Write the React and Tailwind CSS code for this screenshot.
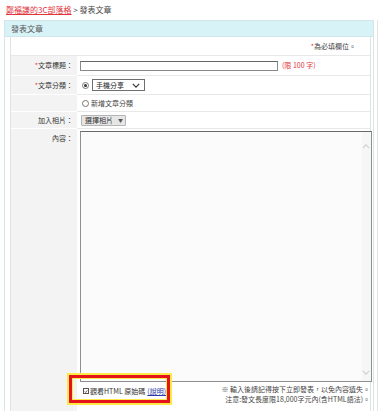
import React from "react";

const F = "font-['Noto_Sans_CJK_TC','Noto_Sans',sans-serif]";

function Radio({ checked }) {
  return (
    <span className="inline-flex items-center justify-center w-[7px] h-[7px] rounded-full border border-[#777] bg-white shrink-0">
      {checked && <span className="w-[3px] h-[3px] rounded-full bg-[#333]" />}
    </span>
  );
}

function Chevron({ className, up }) {
  return (
    <svg className={className} viewBox="0 0 10 6" width="8" height="5">
      <path d={up ? "M1 5 L5 1 L9 5" : "M1 1 L5 5 L9 1"} fill="none" stroke="currentColor" strokeWidth="1.4" />
    </svg>
  );
}

export default function App() {
  return (
    <div className={`w-[386px] h-[411px] bg-white relative overflow-hidden text-[#333] ${F}`}>
      {/* breadcrumb */}
      <div className="h-[20px] pl-[6px] pt-[4px] text-[8px] leading-[11px]">
        <a className="text-[#e2343b] underline">鄭褔謙的3C部落格</a>
        <span className="text-[#444]"> &gt; 發表文章</span>
      </div>

      {/* page edge line */}
      <div className="absolute left-[377px] top-[20px] bottom-0 w-px bg-[#e4e4e4]" />

      {/* panel */}
      <div className="ml-[4px] w-[370px] h-[400px] border border-[#d4e6e9] border-b-0">
        <div className="h-[16px] bg-[#d8f3f7] border-b border-[#cfe6ea] pl-[6px] text-[8px] leading-[16px] text-[#555]">
          發表文章
        </div>
        <div className="pl-[5px] pr-[2px]">
          <div className="border-l border-r border-[#e2e2e2]">
            {/* required note */}
            <div className="h-[19px] flex items-center justify-end pr-[14px] text-[7px] text-[#444] border-b border-[#e8e8e8]">
              <span className="text-[#e2343b]">*</span>為必填欄位。
            </div>

            {/* title */}
            <div className="grid grid-cols-[66px_1fr] h-[20px]">
              <div className="bg-[#f3f3f3] flex items-center justify-end pr-[4px] text-[7px] border-b border-white">
                <span className="text-[#e2343b]">*</span>文章標題：
              </div>
              <div className="flex items-center pl-[3px] border-b border-[#e8e8e8]">
                <div className="w-[198px] h-[10px] border border-[#8a8a8a] border-t-[#666] bg-white" />
                <span className="ml-[4px] text-[7px] text-[#e2343b]">(限 100 字)</span>
              </div>
            </div>

            {/* category */}
            <div className="grid grid-cols-[66px_1fr] h-[19px]">
              <div className="bg-[#f3f3f3] flex items-center justify-end pr-[4px] text-[7px] border-b border-white">
                <span className="text-[#e2343b]">*</span>文章分類：
              </div>
              <div className="flex items-center pl-[5px] border-b border-[#e8e8e8]">
                <Radio checked />
                <div className="ml-[3px] w-[53px] h-[12px] border border-[#6f6f6f] bg-white flex items-center justify-between pl-[3px] pr-[4px] text-[7px] text-[#222]">
                  <span>手機分享</span>
                  <Chevron className="text-[#333]" />
                </div>
              </div>
            </div>

            {/* new category */}
            <div className="grid grid-cols-[66px_1fr] h-[17px]">
              <div className="bg-[#f3f3f3] border-b border-white" />
              <div className="flex items-center pl-[5px] border-b border-[#e8e8e8] text-[7px] text-[#444]">
                <Radio />
                <span className="ml-[2px]">新增文章分類</span>
              </div>
            </div>

            {/* photo */}
            <div className="grid grid-cols-[66px_1fr] h-[17px]">
              <div className="bg-[#f3f3f3] flex items-center justify-end pr-[4px] text-[7px] border-b border-white">
                加入相片：
              </div>
              <div className="flex items-center pl-[4px] border-b border-[#e8e8e8]">
                <div className="w-[45px] h-[11px] border border-[#b5b5b5] bg-[#e6e6e6] rounded-[1px] flex items-center pl-[3px] text-[7px] text-[#333]">
                  <span>選擇相片</span>
                  <span className="ml-[5px] text-[5px] text-[#555]">▼</span>
                </div>
              </div>
            </div>

            {/* content */}
            <div className="grid grid-cols-[66px_1fr] h-[300px]">
              <div className="bg-[#f3f3f3] flex justify-end pr-[4px] pt-[4px] text-[7px]">
                內容：
              </div>
              <div className="pl-[3px] pt-[2px]">
                <div className="relative w-[292px] h-[251px] border border-[#8f8f8f] border-t-[#6a6a6a] bg-[#fbfbfb]">
                  <div className="absolute right-0 top-0 bottom-0 w-[9px] bg-[#f6f6f6]" />
                  <Chevron up className="absolute right-[1px] top-[12px] text-[#cfcfcf]" />
                  <Chevron className="absolute right-[1px] bottom-[6px] text-[#cfcfcf]" />
                </div>
                <div className="flex items-start justify-between pr-[2px] pt-[2px]">
                  <div className="flex items-center pl-[3px] pt-[2px] text-[7px] text-[#333] whitespace-nowrap">
                    <span className="w-[6px] h-[6px] border border-[#555] bg-white flex items-center justify-center shrink-0">
                      <svg viewBox="0 0 6 6" width="5" height="5">
                        <path d="M1 3 L2.5 4.5 L5 1.2" fill="none" stroke="#222" strokeWidth="1" />
                      </svg>
                    </span>
                    <span className="ml-[1px]">觀看HTML 原始碼</span>
                    <a className="ml-[2px] text-[#2b3aa8] underline">(說明)</a>
                  </div>
                  <div className="text-right text-[7px] leading-[10px] text-[#444]">
                    <div>※ 輸入後請記得按下立即發表，以免內容遺失。</div>
                    <div>注意:發文長度限18,000字元內(含HTML語法)。</div>
                  </div>
                </div>
              </div>
            </div>
          </div>
        </div>
      </div>

      {/* highlight annotation */}
      <div className="absolute left-[69px] top-[375px] w-[101px] h-[28px] border-[3px] border-[#e4141b] shadow-[0_0_0_2px_#ffe94a,inset_0_0_0_1px_#ffe94a]" />
    </div>
  );
}
